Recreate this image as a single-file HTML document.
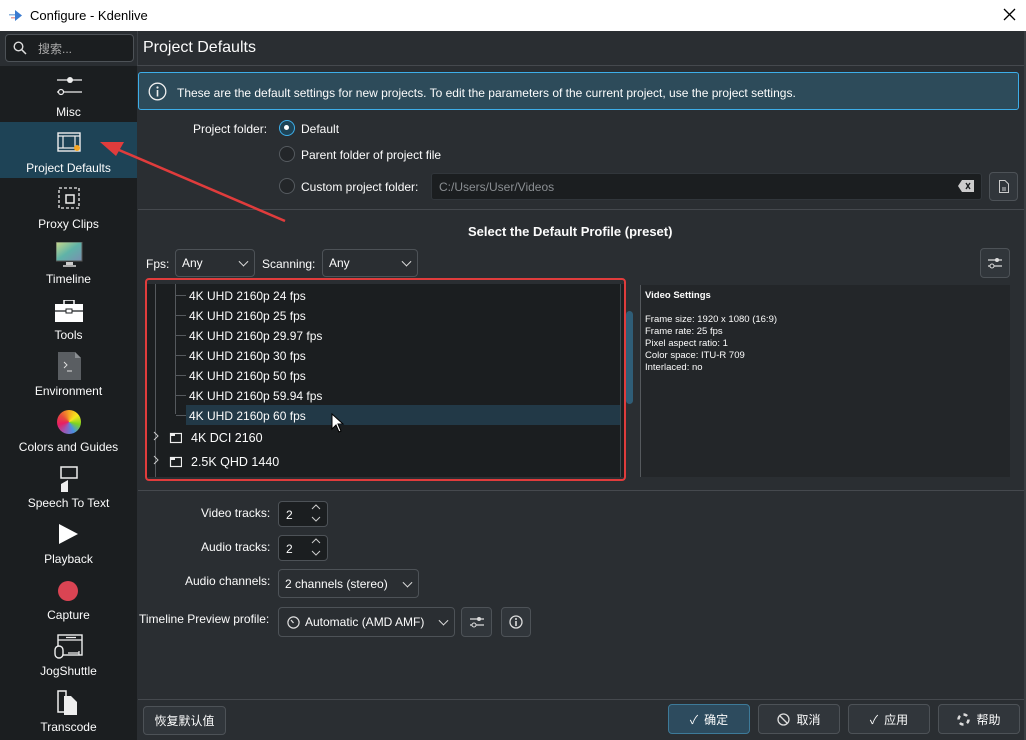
<!DOCTYPE html>
<html><head><meta charset="utf-8"><style>
*{box-sizing:border-box;margin:0;padding:0}
body{width:1026px;height:740px;overflow:hidden;background:#2a2e32;font-family:"Liberation Sans","Noto Sans CJK SC",sans-serif;font-size:12px;color:#fcfcfc;position:relative}
.a{position:absolute}
.title{left:0;top:0;width:1026px;height:31px;background:#fff;color:#000;font-size:13px}
.side{left:0;top:66px;width:137px;height:674px;background:#1b1e20}
.item{position:absolute;left:0;width:137px;height:56px;text-align:center}
.item .lbl{position:absolute;left:0;right:0;top:38px;font-size:12px}
.btn{position:absolute;border:1px solid #4d5257;border-radius:4px;background:#31363b;font-size:12px;display:flex;align-items:center;justify-content:center}
.combo{position:absolute;border:1px solid #4d5257;border-radius:4px;background:#2a2e32;padding-left:6px;display:flex;align-items:center}
.chev{position:absolute;right:7px;top:50%;width:7px;height:7px;border-right:1.3px solid #ddd;border-bottom:1.3px solid #ddd;transform:translateY(-70%) rotate(45deg)}
.radio{position:absolute;width:16px;height:16px;border-radius:50%;border:1px solid #555a5f;background:#232629}
.row{position:absolute;left:189px;font-size:12px}
.hl{position:absolute;left:0;height:1px;background:#3c4045}
</style></head><body>
<div class="a title">
 <svg class="a" style="left:9px;top:9px" width="14" height="13"><rect x="0" y="5" width="6" height="1.5" fill="#8fb4de"/><rect x="2" y="8" width="5" height="1.5" fill="#e9a0a0"/><path d="M6 1 L13 6.5 L6 12Z" fill="#3b7bd0"/></svg>
 <div class="a" style="left:30px;top:8px">Configure - Kdenlive</div>
 <svg class="a" style="left:1003px;top:8px" width="13" height="13"><path d="M1 1L12 12M12 1L1 12" stroke="#000" stroke-width="1.3"/></svg>
</div>
<div class="a" style="left:1024px;top:31px;width:2px;height:709px;background:#3a3e42"></div>
<div class="a" style="left:0;top:31px;width:137px;height:35px;background:#2a2e32"></div>
<div class="a" style="left:5px;top:34px;width:129px;height:28px;border:1px solid #4d5257;border-radius:4px;background:#1b1e20"></div>
<svg class="a" style="left:13px;top:41px" width="14" height="14"><circle cx="5.5" cy="5.5" r="4.3" stroke="#ddd" stroke-width="1.4" fill="none"/><path d="M8.7 8.7L13 13" stroke="#ddd" stroke-width="1.5"/></svg>
<div class="a" style="left:38px;top:40px;color:#aaa">搜索...</div>
<div class="a" style="left:137px;top:31px;width:1px;height:35px;background:#3c4045"></div>
<div class="a" style="left:143px;top:39px;font-size:16px">Project Defaults</div>
<div class="a" style="left:137px;top:65px;width:887px;height:1px;background:#45494e"></div>

<div class="a side">
 <div class="item" style="top:0">
  <svg class="a" style="left:57px;top:10px" width="25" height="22"><path d="M0 4H25M0 16H25" stroke="#eee" stroke-width="1.3"/><circle cx="13" cy="4" r="3" fill="#eee"/><circle cx="4" cy="16" r="2.5" fill="#1b1e20" stroke="#eee" stroke-width="1.2"/></svg>
  <div class="lbl" style="top:39px">Misc</div></div>
 <div class="item" style="top:56px;background:#1e4356">
  <svg class="a" style="left:57px;top:10px" width="26" height="22"><rect x="1" y="1" width="22" height="18" fill="none" stroke="#eee" stroke-width="1.4"/><path d="M1 4H23M1 16H23M6 4V16M18 4V16" stroke="#eee" stroke-width="1.2"/><circle cx="20" cy="16" r="3" fill="#f5a623"/></svg>
  <div class="lbl" style="top:39px">Project Defaults</div></div>
 <div class="item" style="top:112px">
  <svg class="a" style="left:57px;top:8px" width="24" height="24"><rect x="2" y="2" width="20" height="20" fill="none" stroke="#eee" stroke-width="1.3" stroke-dasharray="3 2"/><rect x="9" y="9" width="8" height="8" fill="none" stroke="#eee" stroke-width="1.5"/></svg>
  <div class="lbl" style="top:39px">Proxy Clips</div></div>
 <div class="item" style="top:168px">
  <svg class="a" style="left:56px;top:8px" width="27" height="26"><defs><linearGradient id="g" x1="0" y1="0" x2="1" y2="1"><stop offset="0" stop-color="#c9d98a"/><stop offset=".5" stop-color="#5fb3a8"/><stop offset="1" stop-color="#7a8fb0"/></linearGradient></defs><rect x="0" y="0" width="26" height="19" fill="url(#g)" stroke="#555"/><rect x="10" y="20" width="7" height="3" fill="#ccc"/><rect x="7" y="23" width="13" height="2" fill="#aaa"/></svg>
  <div class="lbl" style="top:38px">Timeline</div></div>
 <div class="item" style="top:224px">
  <svg class="a" style="left:55px;top:10px" width="28" height="22"><rect x="0" y="4" width="28" height="18" fill="#fff"/><rect x="9" y="0" width="10" height="5" fill="none" stroke="#fff" stroke-width="1.5"/><path d="M0 11H28" stroke="#1b1e20" stroke-width="1.2"/><rect x="11" y="9" width="6" height="4" fill="#fff" stroke="#1b1e20"/></svg>
  <div class="lbl" style="top:38px">Tools</div></div>
 <div class="item" style="top:280px">
  <svg class="a" style="left:58px;top:6px" width="24" height="28"><path d="M0 0H17L23 6V28H0Z" fill="#5a5e62"/><path d="M17 0V6H23" fill="#8a8e92"/><path d="M6 10L9 13L6 16M9 19H14" stroke="#ddd" stroke-width="1" fill="none"/></svg>
  <div class="lbl" style="top:38px">Environment</div></div>
 <div class="item" style="top:336px">
  <div class="a" style="left:57px;top:8px;width:24px;height:24px;border-radius:50%;background:conic-gradient(#f5a623,#f8e71c,#7ed321,#4a90e2,#9b59b6,#e91e63,#e74c3c,#f5a623)"></div>
  <div class="lbl" style="top:38px">Colors and Guides</div></div>
 <div class="item" style="top:392px">
  <svg class="a" style="left:59px;top:8px" width="22" height="26"><rect x="2" y="1" width="16" height="11" fill="none" stroke="#eee" stroke-width="1.5"/><path d="M2 26V18L9 14V26Z" fill="#eee"/></svg>
  <div class="lbl" style="top:38px">Speech To Text</div></div>
 <div class="item" style="top:448px">
  <svg class="a" style="left:59px;top:10px" width="20" height="20"><path d="M0 0L19 10L0 20Z" fill="#fff"/></svg>
  <div class="lbl" style="top:38px">Playback</div></div>
 <div class="item" style="top:504px">
  <div class="a" style="left:58px;top:11px;width:20px;height:20px;border-radius:50%;background:#da4453"></div>
  <div class="lbl" style="top:38px">Capture</div></div>
 <div class="item" style="top:560px">
  <svg class="a" style="left:54px;top:8px" width="30" height="26"><rect x="4" y="1" width="24" height="20" fill="none" stroke="#eee" stroke-width="1.4"/><path d="M4 6H28M12 3.5H22M14 19H25M25 17V21" stroke="#eee" stroke-width="1.2"/><rect x="1" y="12" width="8" height="12" rx="4" fill="#1b1e20" stroke="#eee" stroke-width="1.4"/></svg>
  <div class="lbl" style="top:38px">JogShuttle</div></div>
 <div class="item" style="top:616px">
  <svg class="a" style="left:57px;top:8px" width="22" height="26"><path d="M1 1H9V22H1Z" fill="none" stroke="#eee" stroke-width="1.5"/><path d="M7 6H14L20 12V25H7Z" fill="#eee"/></svg>
  <div class="lbl" style="top:38px">Transcode</div></div>
</div>

<!-- info box -->
<div class="a" style="left:138px;top:72px;width:881px;height:38px;background:#2d4b5a;border:1px solid #3daee9;border-radius:3px"></div>
<svg class="a" style="left:148px;top:82px" width="19" height="19"><circle cx="9.5" cy="9.5" r="8.3" stroke="#eee" stroke-width="1.3" fill="none"/><circle cx="9.5" cy="5.5" r="1.1" fill="#eee"/><path d="M9.5 8V14.5" stroke="#eee" stroke-width="1.6"/></svg>
<div class="a" style="left:177px;top:86px">These are the default settings for new projects. To edit the parameters of the current project, use the project settings.</div>

<div class="a" style="left:193px;top:122px">Project folder:</div>
<div class="radio" style="left:279px;top:120px;border:1.5px solid #3daee9;background:#1e4356"><div class="a" style="left:4px;top:4px;width:5px;height:5px;border-radius:50%;background:#fff"></div></div>
<div class="a" style="left:301px;top:122px">Default</div>
<div class="radio" style="left:279px;top:146px"></div>
<div class="a" style="left:301px;top:148px">Parent folder of project file</div>
<div class="radio" style="left:279px;top:178px"></div>
<div class="a" style="left:301px;top:180px">Custom project folder:</div>
<div class="a" style="left:431px;top:173px;width:551px;height:27px;background:#1b1e20;border:1px solid #31363b;border-radius:3px"></div>
<div class="a" style="left:439px;top:180px;color:#8a8e92">C:/Users/User/Videos</div>
<svg class="a" style="left:958px;top:180px" width="16" height="12"><path d="M4 0H16V12H4L0 6Z" fill="#ccc"/><path d="M8 3L12 9M12 3L8 9" stroke="#1b1e20" stroke-width="1.4"/></svg>
<div class="btn" style="left:989px;top:172px;width:29px;height:29px"><svg width="10" height="13"><path d="M.5 .5H6L9.5 4V12.5H.5Z" fill="none" stroke="#ccc"/><path d="M3 8H7M3 10H7" stroke="#ccc"/></svg></div>
<div class="hl" style="left:138px;top:209px;width:886px;background:#45494e"></div>

<div class="a" style="left:468px;top:224px;font-weight:bold;font-size:13px">Select the Default Profile (preset)</div>
<div class="a" style="left:146px;top:257px">Fps:</div>
<div class="combo" style="left:175px;top:249px;width:80px;height:28px">Any<div class="chev"></div></div>
<div class="a" style="left:262px;top:257px">Scanning:</div>
<div class="combo" style="left:322px;top:249px;width:96px;height:28px">Any<div class="chev"></div></div>
<div class="btn" style="left:980px;top:248px;width:30px;height:30px"><svg width="14" height="12"><path d="M0 3H14M0 9H14" stroke="#ddd" stroke-width="1.2"/><circle cx="9" cy="3" r="2" fill="#ddd"/><circle cx="4" cy="9" r="2" fill="#2a2e32" stroke="#ddd"/></svg></div>

<!-- tree -->
<div class="a" style="left:147px;top:284px;width:477px;height:193px;background:#1b1e20"></div>
<div class="a" style="left:155px;top:284px;width:1px;height:193px;background:#55595d"></div>
<div class="a" style="left:175px;top:284px;width:1px;height:130px;background:#55595d"></div>
<div class="a" style="left:186px;top:405px;width:434px;height:20px;background:#223947"></div>
<div class="a" style="left:620px;top:284px;width:1px;height:193px;background:#45494e"></div>
<div id="rows"></div>
<div class="row" style="top:289px">4K UHD 2160p 24 fps</div>
<div class="row" style="top:309px">4K UHD 2160p 25 fps</div>
<div class="row" style="top:329px">4K UHD 2160p 29.97 fps</div>
<div class="row" style="top:349px">4K UHD 2160p 30 fps</div>
<div class="row" style="top:369px">4K UHD 2160p 50 fps</div>
<div class="row" style="top:389px">4K UHD 2160p 59.94 fps</div>
<div class="row" style="top:409px">4K UHD 2160p 60 fps</div>
<div class="a" style="left:176px;top:295px;width:10px;height:1px;background:#55595d;box-shadow:0 20px #55595d,0 40px #55595d,0 60px #55595d,0 80px #55595d,0 100px #55595d,0 120px #55595d"></div>
<svg class="a" style="left:152px;top:431px" width="30" height="38"><path d="M2 1L6 5L2 9M2 25L6 29L2 33" stroke="#ccc" fill="none"/><rect x="18.5" y="2.5" width="11" height="9" fill="none" stroke="#eee" stroke-width="1.2"/><rect x="18.5" y="26.5" width="11" height="9" fill="none" stroke="#eee" stroke-width="1.2"/><path d="M18 4H23M18 28H23" stroke="#eee" stroke-width="2"/></svg>
<div class="a" style="left:191px;top:431px;font-size:12.5px">4K DCI 2160</div>
<div class="a" style="left:191px;top:455px;font-size:12.5px">2.5K QHD 1440</div>
<svg class="a" style="left:331px;top:413px" width="14" height="20"><path d="M1 1V16L5 12L8 19L10 18L7 11H12Z" fill="#fff" stroke="#000"/></svg>
<div class="a" style="left:145px;top:278px;width:481px;height:203px;border:2.5px solid #e03c3c;border-radius:4px"></div>
<div class="a" style="left:626px;top:311px;width:7px;height:93px;border-radius:4px;background:#2f5d77"></div>
<div class="a" style="left:640px;top:285px;width:370px;height:192px;background:#232629;border-left:1px solid #55595d"></div>
<div class="a" style="left:645px;top:290px;font-size:9.5px;font-weight:bold">Video Settings</div>
<div class="a" style="left:645px;top:314px;font-size:9.5px;line-height:12px">Frame size: 1920 x 1080 (16:9)<br>Frame rate: 25 fps<br>Pixel aspect ratio: 1<br>Color space: ITU-R 709<br>Interlaced: no</div>
<div class="hl" style="left:138px;top:490px;width:886px;background:#45494e"></div>

<!-- bottom form -->
<div class="a" style="left:201px;top:506px">Video tracks:</div>
<div class="a" style="left:278px;top:501px;width:50px;height:26px;background:#1b1e20;border:1px solid #4d5257;border-radius:4px;padding:6px 0 0 7px">2</div>
<div class="a" style="left:201px;top:540px">Audio tracks:</div>
<div class="a" style="left:278px;top:535px;width:50px;height:26px;background:#1b1e20;border:1px solid #4d5257;border-radius:4px;padding:6px 0 0 7px">2</div>
<svg class="a" style="left:311px;top:503px" width="12" height="55"><path d="M1 6L5 2L9 6M1 14L5 18L9 14M1 40L5 36L9 40M1 48L5 52L9 48" stroke="#ccc" fill="none"/></svg>
<div class="a" style="left:185px;top:574px">Audio channels:</div>
<div class="combo" style="left:278px;top:569px;width:141px;height:29px">2 channels (stereo)<div class="chev"></div></div>
<div class="a" style="left:139px;top:612px">Timeline Preview profile:</div>
<div class="combo" style="left:278px;top:607px;width:177px;height:30px;padding-left:8px"><svg width="13" height="13" style="margin-right:5px"><circle cx="6.5" cy="6.5" r="5.6" fill="none" stroke="#ddd" stroke-width="1.2"/><path d="M6.5 7L4 4" stroke="#ddd" stroke-width="1.3"/></svg>Automatic (AMD AMF)<div class="chev"></div></div>
<div class="btn" style="left:461px;top:607px;width:31px;height:30px"><svg width="14" height="12"><path d="M0 3H14M0 9H14" stroke="#ddd" stroke-width="1.2"/><circle cx="9" cy="3" r="2" fill="#ddd"/><circle cx="4" cy="9" r="2" fill="#31363b" stroke="#ddd"/></svg></div>
<div class="btn" style="left:501px;top:607px;width:30px;height:30px"><svg width="14" height="14"><circle cx="7" cy="7" r="6" fill="none" stroke="#ddd" stroke-width="1.3"/><circle cx="7" cy="4" r="1" fill="#ddd"/><path d="M7 6V11" stroke="#ddd" stroke-width="1.6"/></svg></div>

<div class="hl" style="left:138px;top:699px;width:886px;background:#45494e"></div>
<div class="btn" style="left:143px;top:706px;width:83px;height:29px">恢复默认值</div>
<div class="btn" style="left:668px;top:704px;width:82px;height:30px;background:#2d4b5e;border-color:#3d7a99"><span style="margin-right:6px">✓</span>确定</div>
<div class="btn" style="left:758px;top:704px;width:82px;height:30px"><svg width="13" height="13" style="margin-right:6px"><circle cx="6.5" cy="6.5" r="5.5" fill="none" stroke="#ddd" stroke-width="1.3"/><path d="M2.5 2.5L10.5 10.5" stroke="#ddd" stroke-width="1.3"/></svg>取消</div>
<div class="btn" style="left:848px;top:704px;width:82px;height:30px"><span style="margin-right:6px">✓</span>应用</div>
<div class="btn" style="left:938px;top:704px;width:82px;height:30px"><svg width="13" height="13" style="margin-right:6px"><circle cx="6.5" cy="6.5" r="5" fill="none" stroke="#ddd" stroke-width="2.5" stroke-dasharray="4 3.8"/><circle cx="6.5" cy="6.5" r="2.5" fill="#31363b"/></svg>帮助</div>

<!-- red arrow -->
<svg class="a" style="left:0;top:0" width="1026" height="740"><path d="M285 221L112 147" stroke="#e03c3c" stroke-width="2.5"/><path d="M100 142L124 142L116 156Z" fill="#e03c3c"/></svg>
</body></html>
